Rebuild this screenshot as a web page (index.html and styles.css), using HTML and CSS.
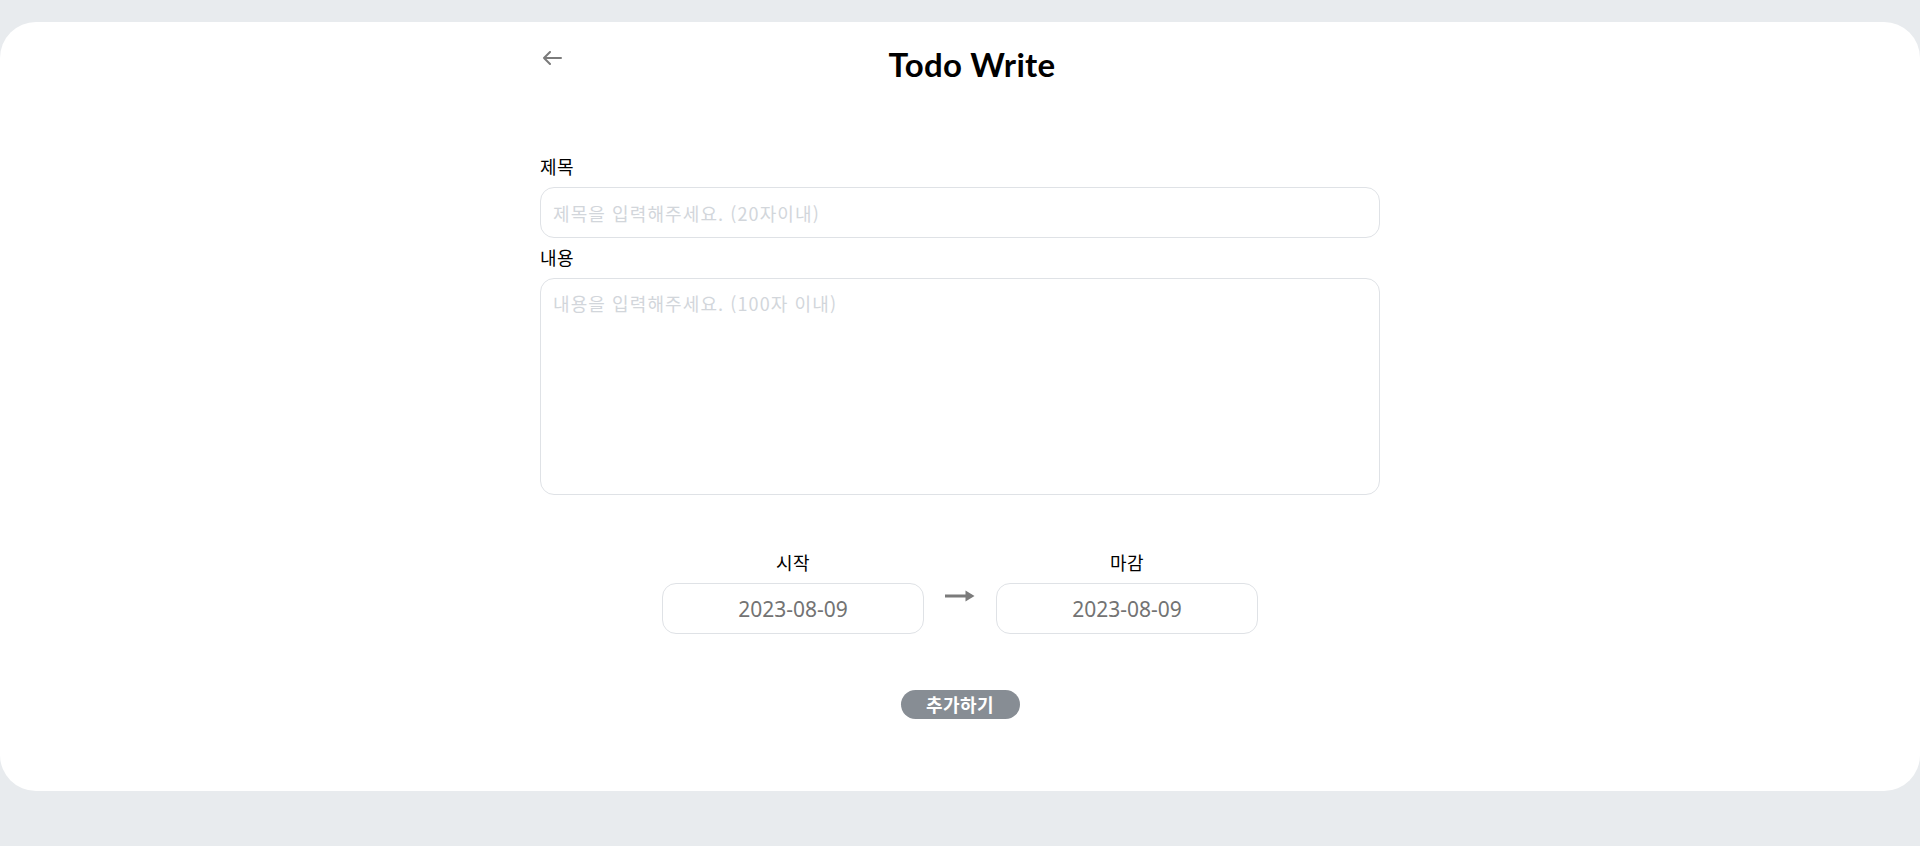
FILE: index.html
```html
<!DOCTYPE html>
<html lang="ko">
<head>
<meta charset="utf-8">
<title>Todo Write</title>
<link rel="stylesheet" href="styles.css">
</head>
<body>
<main class="card">
  <div class="page">
    <header class="header">
      <button class="back" type="button" aria-label="뒤로">
        <svg width="20" height="14" viewBox="0 0 20 14"><path d="M19 7H2M8 1L2 7l6 6" fill="none" stroke="#7b7b7b" stroke-width="2" stroke-linecap="round" stroke-linejoin="round"/></svg>
      </button>
      <h1 class="title">Todo Write</h1>
    </header>
    <form class="form">
      <label class="field-label" for="t">제목</label>
      <input id="t" class="text-input" type="text" placeholder="제목을 입력해주세요. (20자이내)">
      <label class="field-label second" for="c">내용</label>
      <textarea id="c" class="text-area" placeholder="내용을 입력해주세요. (100자 이내)"></textarea>
      <div class="period">
        <div class="date-col">
          <span class="date-label">시작</span>
          <div class="date-box">2023-08-09</div>
        </div>
        <div class="period-arrow">
          <svg width="30" height="12" viewBox="0 0 30 12"><rect x="0" y="4.5" width="22" height="3" fill="#7b7b7b"/><path d="M20.5 0.5L29.5 6L20.5 11.5z" fill="#7b7b7b"/></svg>
        </div>
        <div class="date-col">
          <span class="date-label">마감</span>
          <div class="date-box">2023-08-09</div>
        </div>
      </div>
      <div class="actions">
        <button class="submit" type="button">추가하기</button>
      </div>
    </form>
  </div>
</main>
</body>
</html>
```
FILE: styles.css
```css
* { box-sizing: border-box; }
html, body { margin: 0; padding: 0; }
body {
  background: #e8ebee;
  font-family: "Noto Sans CJK KR", "Noto Sans", sans-serif;
  color: #000;
  height: 846px;
  padding-top: 22px;
}
.card {
  background: #fff;
  border-radius: 36px;
  height: 769px;
  padding-top: 22px;
}
.page {
  width: 840px;
  margin: 0 auto;
}
.header {
  display: flex;
  align-items: flex-start;
  height: 40px;
}
.back {
  width: 24px;
  height: 14px;
  margin-top: 7px;
  padding: 0 0 0 2px;
  border: 0;
  background: none;
  display: flex;
  align-items: center;
  cursor: pointer;
}
.title {
  flex: 1;
  margin: 0;
  text-align: center;
  font-family: "Lato", "Noto Sans", sans-serif;
  font-weight: 700;
  font-size: 33px;
  line-height: 40px;
  letter-spacing: 0.3px;
}
.form {
  display: flex;
  flex-direction: column;
  margin-top: 70px;
}
.field-label {
  font-size: 18px;
  letter-spacing: 0.5px;
  line-height: 24px;
  margin-bottom: 9px;
}
.field-label.second { margin-top: 7px; }
.text-input, .text-area {
  width: 100%;
  border: 1px solid #dfe2e6;
  border-radius: 14px;
  font-family: "Noto Sans CJK KR", "Noto Sans", sans-serif;
  font-size: 18px;
  letter-spacing: 1.1px;
  line-height: 24px;
  padding: 12px 12px;
  color: #333;
  outline: none;
  background: #fff;
}
.text-input { height: 51px; }
.text-area { height: 217px; resize: none; display: block; }
.text-input::placeholder, .text-area::placeholder { color: #d2d6db; }
.period {
  display: flex;
  justify-content: center;
  margin-top: 55px;
}
.date-col {
  width: 262px;
  display: flex;
  flex-direction: column;
  align-items: center;
}
.date-label {
  font-size: 18px;
  letter-spacing: 0.5px;
  line-height: 24px;
  margin-bottom: 9px;
}
.date-box {
  width: 100%;
  height: 51px;
  border: 1px solid #dfe2e6;
  border-radius: 14px;
  display: flex;
  align-items: center;
  justify-content: center;
  font-family: "Noto Sans", sans-serif;
  font-size: 21px;
  color: #737373;
}
.period-arrow {
  width: 72px;
  display: flex;
  align-items: center;
  justify-content: center;
  padding-top: 8px;
}
.actions {
  display: flex;
  justify-content: center;
  margin-top: 56px;
}
.submit {
  height: 29px;
  width: 119px;
  border: 0;
  border-radius: 15px;
  background: #878d94;
  color: #fff;
  font-family: "Noto Sans CJK KR", "Noto Sans", sans-serif;
  font-size: 18px;
  font-weight: 700;
  letter-spacing: 0.5px;
  line-height: 29px;
  padding: 0;
  cursor: pointer;
}
```
